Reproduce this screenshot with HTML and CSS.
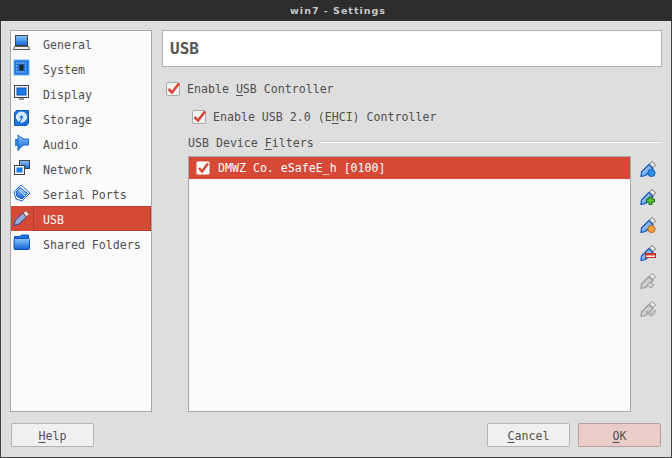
FILE: index.html
```html
<!DOCTYPE html>
<html lang="en">
  <head>
    <meta charset="UTF-8" />
    <title>win7 - Settings</title>
    <link rel="stylesheet" href="styles.css">
  </head>
  <body>
    <svg class="defs" width="0" height="0">
      <defs>
        <linearGradient id="blue" x1="0" y1="0" x2="0" y2="1">
          <stop offset="0" stop-color="#8cc8fa" />
          <stop offset="1" stop-color="#0f62d8" />
        </linearGradient>
        <linearGradient id="plug-body" x1="0" y1="0" x2="1" y2="1">
          <stop offset="0" stop-color="#d4eafc" />
          <stop offset="1" stop-color="#2a80e4" />
        </linearGradient>
        <symbol id="plug" viewBox="0 0 18 18">
          <path d="M2 16.5 L2.5 12 L10 4.5 L14 8.5 L6.5 15.5 Z" fill="url(#plug-body)" stroke="#1252b8" stroke-width="1.2" stroke-linejoin="round" />
          <path d="M10.5 4 L13 1.5 L16.5 5 L14 7.5 Z" fill="#f8f8f8" stroke="#666" stroke-width="1" stroke-linejoin="round" />
        </symbol>
        <symbol id="plug-off" viewBox="0 0 18 18">
          <path d="M2 16.5 L2.5 12 L10 4.5 L14 8.5 L6.5 15.5 Z" fill="#cfcfcf" stroke="#9a9a9a" stroke-width="1.2" stroke-linejoin="round" />
          <path d="M10.5 4 L13 1.5 L16.5 5 L14 7.5 Z" fill="#eeeeee" stroke="#8c8c8c" stroke-width="1" stroke-linejoin="round" />
        </symbol>
      </defs>
    </svg>

    <div class="window">
      <div class="titlebar">win7 - Settings</div>

      <div class="content">
        <ul class="sidebar">
          <li class="nav-item">
            <svg class="nav-icon" viewBox="0 0 18 18"><rect x="2.5" y="1.5" width="12" height="10" fill="url(#blue)" stroke="#444" /><path d="M1.5 12.5 H15.5 L16.5 15.5 H0.5 Z" fill="#eee" stroke="#555" /></svg>
            <span>General</span>
          </li>
          <li class="nav-item">
            <svg class="nav-icon" viewBox="0 0 18 18"><rect x="1" y="1" width="15" height="15" fill="#1c74e0" stroke="#6aaef0" /><path d="M3 4 H14 M3 7 H5 M12 7 H14 M3 10 H5 M12 10 H14 M3 13 H14" stroke="#cfe6fb" stroke-width="1.2" stroke-dasharray="1.2 1" /><rect x="6.5" y="5.5" width="4" height="6" fill="#222" /></svg>
            <span>System</span>
          </li>
          <li class="nav-item">
            <svg class="nav-icon" viewBox="0 0 18 18"><rect x="1.5" y="1.5" width="14" height="12" fill="#f2f2f2" stroke="#444" /><rect x="4" y="4" width="9" height="7" fill="#1c7ae6" stroke="#0f55b5" /><path d="M6 14 H11 V16 H6 Z" fill="#999" /></svg>
            <span>Display</span>
          </li>
          <li class="nav-item">
            <svg class="nav-icon" viewBox="0 0 18 18"><path d="M3.5 1.5 H15.5 V14 L13.5 16.5 H1.5 V4 Z" fill="#1c74e0" stroke="#0f55b5" /><circle cx="8.5" cy="8" r="5" fill="#cfe6fb" stroke="#fff" /><circle cx="8.5" cy="8" r="1.5" fill="#1c74e0" /><path d="M6 14 L9 9" stroke="#1252b8" /></svg>
            <span>Storage</span>
          </li>
          <li class="nav-item">
            <svg class="nav-icon" viewBox="0 0 18 18"><path d="M5 1 C7 3 9 4 11 5 H15.5 V11 H11 C9 12 7 14 5 16.5 Z" fill="url(#blue)" stroke="#1a68c8" /><rect x="2" y="5" width="3" height="7" fill="#2a80e0" /></svg>
            <span>Audio</span>
          </li>
          <li class="nav-item">
            <svg class="nav-icon" viewBox="0 0 18 18"><rect x="6.5" y="1.5" width="10" height="8" fill="url(#blue)" stroke="#444" /><rect x="1.5" y="6.5" width="10" height="9" fill="#f2f2f2" stroke="#444" /><rect x="3.5" y="8.5" width="6" height="5" fill="#1c7ae6" /></svg>
            <span>Network</span>
          </li>
          <li class="nav-item">
            <svg class="nav-icon" viewBox="0 0 18 18"><path d="M8 1 L17 9 L9 17 L3 15 L1 8 Z" fill="#fff" stroke="#1c68c8" /><path d="M7 3.5 L14.5 9.5 L9 15 L4 12.5 L3 8 Z" fill="url(#blue)" stroke="#1252b8" /><path d="M6 6 L12 12 M8 5.5 L13 10.5" stroke="#d6ebfc" /></svg>
            <span>Serial Ports</span>
          </li>
          <li class="nav-item selected">
            <svg class="nav-icon" viewBox="0 0 18 18"><path d="M1 16.5 L2.5 11 L10 4 L13.5 8 L6 15 Z" fill="#9aaad6" stroke="#2b4b9e" stroke-linejoin="round" /><path d="M10 4 L13 1.5 L16.5 5 L13.5 8 Z" fill="#f6d8d4" stroke="#8a4a44" stroke-linejoin="round" /></svg>
            <span class="focus">USB</span>
          </li>
          <li class="nav-item">
            <svg class="nav-icon" viewBox="0 0 18 18"><path d="M1.5 4.5 V2.5 H7 L8.5 1 H15.5 V4.5 Z" fill="#1c74e0" stroke="#1252b8" /><rect x="1" y="4.5" width="15.5" height="11" rx="1" fill="url(#blue)" stroke="#1252b8" /></svg>
            <span>Shared Folders</span>
          </li>
        </ul>

        <div class="panel">
          <div class="page-title">USB</div>

          <label class="check-row">
            <span class="checkbox"><svg viewBox="0 0 14 14"><path d="M2.5 7 L6 10.5 L13 1.5" /></svg></span>
            <span>Enable <u>U</u>SB Controller</span>
          </label>
          <label class="check-row nested">
            <span class="checkbox"><svg viewBox="0 0 14 14"><path d="M2.5 7 L6 10.5 L13 1.5" /></svg></span>
            <span>Enable USB 2.0 (E<u>H</u>CI) Controller</span>
          </label>

          <div class="group-head">
            <span>USB Device <u>F</u>ilters</span>
            <span class="group-line"></span>
          </div>

          <div class="filters">
            <div class="list">
              <div class="list-row">
                <span class="checkbox small"><svg viewBox="0 0 14 14"><path d="M3 7 L6 10.5 L12 2.5" /></svg></span>
                <span>DMWZ Co. eSafeE_h [0100]</span>
              </div>
            </div>
            <div class="tools">
              <svg class="tool" viewBox="0 0 18 18"><use href="#plug" /><circle cx="12.5" cy="13" r="3.6" fill="#2f8ee8" stroke="#1a60b8" /></svg>
              <svg class="tool" viewBox="0 0 18 18"><use href="#plug" /><path d="M10 9 H13 V11 H15.5 V14 H13 V16.5 H10 V14 H7.5 V11 H10 Z" fill="#5cc23a" stroke="#1d6a12" /></svg>
              <svg class="tool" viewBox="0 0 18 18"><use href="#plug" /><circle cx="12.5" cy="13" r="3.6" fill="#f5a23c" stroke="#b5651a" /></svg>
              <svg class="tool" viewBox="0 0 18 18"><use href="#plug" /><rect x="6.5" y="9.5" width="10" height="4" fill="#f8f0f0" stroke="#c42a1a" /><rect x="7" y="10" width="9" height="1.5" fill="#e04030" /></svg>
              <svg class="tool" viewBox="0 0 18 18"><use href="#plug-off" /><path d="M8 13 L11 10 L15 13 L12 16 Z" fill="#cfcfcf" stroke="#9a9a9a" /></svg>
              <svg class="tool" viewBox="0 0 18 18"><use href="#plug-off" /><path d="M8 11 L12 14 L16 10 V13 L12 16 L8 13 Z" fill="#cfcfcf" stroke="#9a9a9a" /></svg>
            </div>
          </div>
        </div>
      </div>

      <div class="footer">
        <button class="btn"><u>H</u>elp</button>
        <div class="footer-right">
          <button class="btn"><u>C</u>ancel</button>
          <button class="btn primary"><u>O</u>K</button>
        </div>
      </div>
    </div>
  </body>
</html>
```

FILE: styles.css
```css
* {
  box-sizing: border-box;
}
body {
  margin: 0;
  overflow: hidden;
  font-family: "DejaVu Sans Mono", monospace;
  font-size: 11.6px;
  color: #505050;
  background: #dedede;
}
u {
  text-underline-offset: 2px;
}
.defs {
  position: absolute;
}

.window {
  display: flex;
  flex-direction: column;
  width: 672px;
  height: 458px;
  border: solid #444;
  border-width: 0 1px 1px 1px;
}
.titlebar {
  flex: none;
  height: 21px;
  line-height: 21px;
  margin: 0 -1px;
  padding-left: 4px;
  background: #2d2d2d;
  color: #c8c8c8;
  text-align: center;
  font-family: "DejaVu Sans", sans-serif;
  font-size: 9.5px;
  font-weight: bold;
  letter-spacing: 1px;
}

.content {
  flex: none;
  display: flex;
  gap: 10px;
  height: 382px;
  margin-top: 9px;
  padding: 0 9px;
}

.sidebar {
  flex: none;
  width: 142px;
  margin: 0;
  padding: 0;
  list-style: none;
  background: #fbfbfb;
  border: 1px solid #a8a8a8;
}
.nav-item {
  display: flex;
  height: 25px;
}
.nav-icon {
  flex: none;
  width: 18px;
  height: 18px;
  margin: 3px 2px 0 2px;
}
.nav-item > span {
  flex: 1;
  line-height: 25px;
  padding: 2px 0 0 10px;
}
.selected {
  background: #d64937;
  color: #fff;
}
.focus {
  outline: 1px dotted #96352a;
  outline-offset: -1px;
}

.panel {
  flex: 1;
  display: flex;
  flex-direction: column;
  min-width: 0;
}
.page-title {
  flex: none;
  height: 37px;
  line-height: 36px;
  padding-left: 7px;
  background: #fff;
  border: 1px solid #b0b0b0;
  font-size: 16px;
  font-weight: bold;
  color: #555;
}

.check-row {
  display: flex;
  align-items: center;
  gap: 7px;
  height: 16px;
  margin: 14px 0 0 4px;
}
.check-row.nested {
  margin: 12px 0 0 30px;
}
.checkbox {
  flex: none;
  width: 14px;
  height: 14px;
  background: #f2f2f2;
  border: 1px solid #aaa;
  border-radius: 2px;
}
.checkbox svg {
  display: block;
  width: 14px;
  height: 14px;
  margin: -1px;
  overflow: visible;
  fill: none;
  stroke: #d64937;
  stroke-width: 2.6;
}
.checkbox.small {
  background: #fff;
  border-color: #e8a89f;
}

.group-head {
  display: flex;
  align-items: center;
  gap: 6px;
  height: 16px;
  margin: 10px 0 0 26px;
}
.group-line {
  flex: 1;
  height: 1px;
  margin-top: -2px;
  background: #fafafa;
  box-shadow: 0 -1px 0 #cfcfcf;
}

.filters {
  flex: 1;
  display: flex;
  margin: 5px 0 0 26px;
  min-height: 0;
}
.list {
  flex: none;
  width: 443px;
  background: #fbfbfb;
  border: 1px solid #a8a8a8;
}
.list-row {
  display: flex;
  align-items: center;
  gap: 8px;
  height: 22px;
  padding-left: 7px;
  background: #d64937;
  color: #fff;
}
.tools {
  flex: 1;
  display: flex;
  flex-direction: column;
  align-items: center;
  gap: 10px;
  padding: 4px 0 0 2px;
}
.tool {
  flex: none;
  width: 18px;
  height: 18px;
}

.footer {
  flex: 1;
  display: flex;
  justify-content: space-between;
  align-items: flex-start;
  padding: 11px 10px 0 10px;
}
.footer-right {
  display: flex;
  gap: 8px;
}
.btn {
  width: 83px;
  height: 24px;
  padding: 2px 0 0 0;
  background: #f0f0f0;
  border: 1px solid #b4b4b4;
  border-radius: 2px;
  font: inherit;
  color: inherit;
}
.btn.primary {
  background: #eacdc9;
  border-color: #b5a09d;
}
```
